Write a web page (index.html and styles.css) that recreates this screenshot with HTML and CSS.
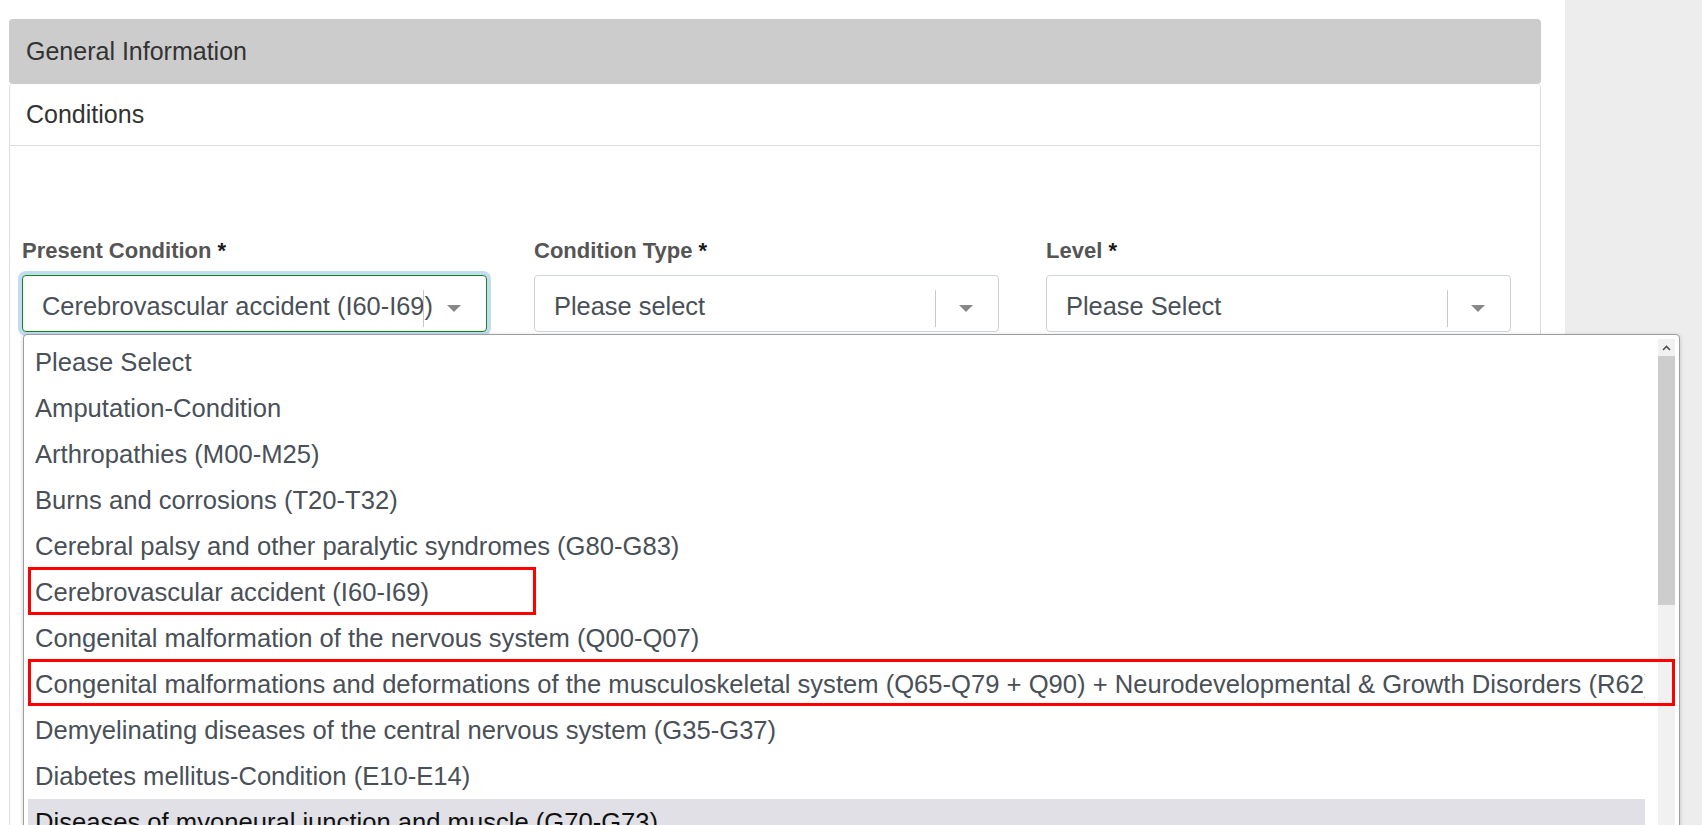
FILE: index.html
```html
<!DOCTYPE html>
<html lang="en">
<head>
<meta charset="utf-8">
<title>Conditions</title>
<link rel="stylesheet" href="styles.css">
</head>
<body>
<div class="layout">
  <main class="content">
    <div class="panel-collapsed">General Information</div>
    <section class="panel">
      <div class="panel-heading">Conditions</div>
      <div class="panel-body">
        <div class="form-row">
          <div class="field">
            <label class="label">Present Condition <span class="req">*</span></label>
            <div class="select is-focused">
              <span class="value">Cerebrovascular accident (I60-I69)</span>
              <span class="sep"></span>
              <span class="arrow"></span>
            </div>
          </div>
          <div class="field">
            <label class="label">Condition Type <span class="req">*</span></label>
            <div class="select">
              <span class="value">Please select</span>
              <span class="sep"></span>
              <span class="arrow"></span>
            </div>
          </div>
          <div class="field">
            <label class="label">Level <span class="req">*</span></label>
            <div class="select">
              <span class="value">Please Select</span>
              <span class="sep"></span>
              <span class="arrow"></span>
            </div>
          </div>
        </div>
      </div>
    </section>
  </main>
  <aside class="sidebar"></aside>
</div>

<div class="dropdown">
  <ul class="options">
    <li class="option">Please Select</li>
    <li class="option">Amputation-Condition</li>
    <li class="option">Arthropathies (M00-M25)</li>
    <li class="option">Burns and corrosions (T20-T32)</li>
    <li class="option">Cerebral palsy and other paralytic syndromes (G80-G83)</li>
    <li class="option">Cerebrovascular accident (I60-I69)</li>
    <li class="option">Congenital malformation of the nervous system (Q00-Q07)</li>
    <li class="option">Congenital malformations and deformations of the musculoskeletal system (Q65-Q79 + Q90) + Neurodevelopmental &amp; Growth Disorders (R62)</li>
    <li class="option">Demyelinating diseases of the central nervous system (G35-G37)</li>
    <li class="option">Diabetes mellitus-Condition (E10-E14)</li>
    <li class="option is-hover">Diseases of myoneural junction and muscle (G70-G73)</li>
    <li class="option">Diseases of the nervous system</li>
  </ul>
  <div class="scrollbar">
    <div class="scroll-btn">
      <svg width="9" height="6" viewBox="0 0 9 6"><polyline points="1,5 4.5,1.5 8,5" fill="none" stroke="#505050" stroke-width="1.6"/></svg>
    </div>
    <div class="scroll-thumb"></div>
    <div class="scroll-track"></div>
  </div>
</div>

<div class="mark mark-one"></div>
<div class="mark mark-two"></div>
</body>
</html>
```

FILE: styles.css
```css
* { box-sizing: border-box; }

html, body {
  margin: 0;
  padding: 0;
  height: 825px;
  overflow: hidden;
  background: #ffffff;
  font-family: "Liberation Sans", Arial, Helvetica, sans-serif;
}

.layout {
  display: flex;
  height: 825px;
}

.content {
  width: 1565px;
  flex: none;
  padding: 19px 24px 0 9px;
  background: #ffffff;
}

.sidebar {
  flex: 1;
  background: #ededed;
}

.panel-collapsed {
  height: 65px;
  display: flex;
  align-items: center;
  padding-left: 17px;
  background: #cccccc;
  border-radius: 4px;
  font-size: 25px;
  color: #333333;
}

.panel {
  border: 1px solid #dddddd;
  border-top: 0;
  border-radius: 4px 4px 0 0;
  height: 760px;
}

.panel-heading {
  height: 62px;
  display: flex;
  align-items: center;
  padding-left: 16px;
  font-size: 25px;
  color: #333333;
  border-bottom: 1px solid #dddddd;
}

.panel-body {
  padding: 92px 0 0 12px;
}

.form-row {
  display: grid;
  grid-template-columns: repeat(3, 465px);
  column-gap: 47px;
}

.label {
  display: block;
  height: 26px;
  line-height: 26px;
  margin-bottom: 11px;
  font-size: 22px;
  font-weight: bold;
  color: #555555;
}

.req { color: #1a1a1a; }

.select {
  height: 57px;
  display: flex;
  align-items: center;
  padding: 5px 25px 0 19px;
  border: 1px solid #ced4da;
  border-radius: 4px;
  background: #ffffff;
}

.select.is-focused {
  border-color: #0f8a0f;
  box-shadow: 0 0 0 4px #c3dcf5;
}

.value {
  flex: 1;
  min-width: 0;
  white-space: nowrap;
  font-size: 25.4px;
  color: #495057;
}

.sep {
  width: 1px;
  height: 37px;
  margin: 5px 23px 0 0;
  background: #c8c8c8;
  flex: none;
}

.arrow {
  flex: none;
  width: 0;
  height: 0;
  margin-top: 5px;
  border-left: 7.5px solid transparent;
  border-right: 7.5px solid transparent;
  border-top: 7px solid #888888;
}

.dropdown {
  position: absolute;
  left: 23px;
  top: 334px;
  width: 1657px;
  height: 540px;
  display: flex;
  padding: 4px;
  background: #ffffff;
  border: 1px solid #9d9d9d;
  border-radius: 4px;
  box-shadow: 0 1px 4px rgba(0, 0, 0, 0.18);
  overflow: hidden;
}

.options {
  flex: 1;
  min-width: 0;
  margin: 0 13px 0 0;
  padding: 0;
  list-style: none;
}

.option {
  height: 46px;
  line-height: 46px;
  padding-left: 7px;
  font-size: 25.6px;
  color: #495057;
  white-space: nowrap;
  overflow: hidden;
}

.option.is-hover {
  background: #e0e0e6;
  color: #111111;
}

.scrollbar {
  width: 17px;
  flex: none;
  display: flex;
  flex-direction: column;
  background: #f1f1f1;
}

.scroll-btn {
  height: 17px;
  display: flex;
  align-items: center;
  justify-content: center;
}

.scroll-thumb {
  height: 249px;
  background: #cdcdcd;
}

.scroll-track {
  flex: 1;
}

.mark {
  position: absolute;
  border: 3px solid #ff0000;
}

.mark-one {
  left: 28px;
  top: 567px;
  width: 508px;
  height: 48px;
}

.mark-two {
  left: 28px;
  top: 659px;
  width: 1647px;
  height: 47px;
}
```
